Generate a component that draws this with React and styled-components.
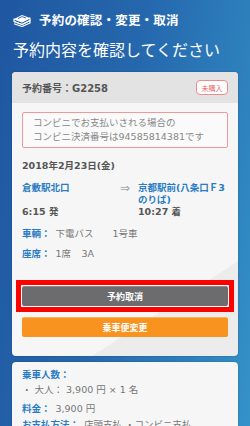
import React from 'react'
import styled, { createGlobalStyle } from 'styled-components'

const GlobalStyle = createGlobalStyle`
  html, body {
    margin: 0;
    padding: 0;
  }
  body {
    width: 250px;
    height: 426px;
    overflow: hidden;
    background: linear-gradient(100deg, #1f57a1 0%, #2567ad 45%, #2f85c0 85%, #3593c8 100%);
    font-family: "DejaVu Sans", "Noto Sans CJK JP", sans-serif;
  }
`

const Page = styled.div`
  padding: 0 12px;
`

const TopBar = styled.div`
  display: flex;
  align-items: center;
  gap: 8px;
  height: 25px;
  padding: 7px 1px 0;
`

const Title = styled.h1`
  margin: 0;
  font-family: "Noto Sans CJK JP", sans-serif;
  font-size: 12.5px;
  font-weight: 700;
  color: #fff;
  letter-spacing: 0.2px;
`

const Subtitle = styled.h2`
  margin: 6px 0 0 1px;
  height: 34px;
  line-height: 22px;
  font-family: "Noto Sans CJK JP", sans-serif;
  font-size: 16px;
  font-weight: 400;
  color: #fff;
`

const Card = styled.section`
  background: ${p => p.plain ? '#f6f6f6' : 'linear-gradient(147deg, #f6f6f6 78%, #ececec 78%)'};
  border-radius: 4px;
  overflow: hidden;
  margin-bottom: 6px;
  box-shadow: 0 0 2px rgba(0, 0, 0, 0.25);
`

const CardHeader = styled.div`
  display: flex;
  align-items: center;
  justify-content: space-between;
  height: 31px;
  padding: 0 10px;
  background: #e3e3e3;
`

const OrderNo = styled.div`
  font-size: 10px;
  font-weight: 700;
  color: #555;
`

const Badge = styled.span`
  display: inline-flex;
  align-items: center;
  justify-content: center;
  width: 30px;
  height: 13px;
  border: 1px solid #ec8c8c;
  border-radius: 4px;
  background: #fff;
  color: #e46a6a;
  font-family: "Noto Sans CJK JP", sans-serif;
  font-size: 7px;
`

const CardBody = styled.div`
  padding: ${p => p.compact ? '6px 10px 10px' : '9px 10px 19px'};
`

const Notice = styled.div`
  border: 1px solid #ee9a9a;
  border-radius: 2px;
  background: #fafafa;
  padding: 3px 10px;
  font-size: 9.5px;
  line-height: 14px;
  color: #888;
`

const DateLine = styled.div`
  margin-top: 11px;
  font-size: 9.5px;
  line-height: 14px;
  font-weight: 700;
  color: #555;
`

const Route = styled.div`
  display: grid;
  grid-template-columns: 98px 18px 1fr;
  margin-top: 9px;
  font-size: 9.5px;
  line-height: 12px;
  font-weight: 700;
`

const Stop = styled.div`
  display: flex;
  flex-direction: column;
  white-space: nowrap;
`

const Station = styled.span`
  color: #2b7cc3;
  min-height: ${p => p.rows * 12}px;
`

const Time = styled.span`
  color: #555;
`

const Arrow = styled.span`
  color: #a5a5a5;
  font-size: 12px;
  font-weight: 400;
  line-height: 12px;
`

const InfoRow = styled.div`
  display: flex;
  margin-top: ${p => p.gap}px;
  font-size: 9.5px;
  line-height: 14px;
  color: #777;
  white-space: nowrap;
`

const Label = styled.span`
  color: #2b7cc3;
  font-weight: 700;
  margin-right: 5px;
`

const Value = styled.span`
  width: ${p => p.w ? p.w + 'px' : 'auto'};
`

const Highlight = styled.div`
  margin: 19px -6px 0 -6px;
  padding: 1px;
  border: 5px solid #ff0000;
  background: #fff;
`

const Button = styled.button`
  display: flex;
  align-items: center;
  justify-content: center;
  width: 100%;
  height: 20px;
  margin: 0;
  margin-top: ${p => p.top || 0}px;
  border: none;
  border-top: 1px solid ${p => p.edge};
  border-radius: 2px;
  background: ${p => p.bg};
  color: #fff;
  font-family: "Noto Sans CJK JP", sans-serif;
  font-size: 9px;
  font-weight: 700;
  padding: 0;
`

const BookIcon = () => (
  <svg width="18" height="14" viewBox="0 0 18 14">
    <path d="M1 6 L9 2 L17 5 L9 9 Z" fill="#fff" />
    <path d="M1 6 L9 9 L17 5 L17 7.5 L9 11.5 L1 8.5 Z" fill="none" stroke="#fff" strokeWidth="1.2" strokeLinejoin="round" />
    <path d="M1 8.5 L9 11.5 L17 7.5 L17 10 L9 13.5 L1 10.8" fill="none" stroke="#fff" strokeWidth="1.2" strokeLinejoin="round" />
    <path d="M5 5.5 L9 3.6 L13 5" stroke="#2360a8" strokeWidth="0.9" fill="none" />
  </svg>
)

export default function App() {
  return (
    <>
      <GlobalStyle />
      <Page>
        <TopBar>
          <BookIcon />
          <Title>予約の確認・変更・取消</Title>
        </TopBar>
        <Subtitle>予約内容を確認してください</Subtitle>

        <Card>
          <CardHeader>
            <OrderNo>予約番号：G2258</OrderNo>
            <Badge>未購入</Badge>
          </CardHeader>
          <CardBody>
            <Notice>
              コンビニでお支払いされる場合の<br />
              コンビニ決済番号は94585814381です
            </Notice>
            <DateLine>2018年2月23日(金)</DateLine>
            <Route>
              <Stop>
                <Station rows={2}>倉敷駅北口</Station>
                <Time>6:15 発</Time>
              </Stop>
              <Arrow>⇒</Arrow>
              <Stop>
                <Station rows={2}>京都駅前(八条口Ｆ3<br />のりば)</Station>
                <Time>10:27 着</Time>
              </Stop>
            </Route>
            <InfoRow gap={9}>
              <Label>車輌：</Label>
              <Value w={57}>下電バス</Value>
              <Value>1号車</Value>
            </InfoRow>
            <InfoRow gap={6}>
              <Label>座席：</Label>
              <Value w={26}>1席</Value>
              <Value>3A</Value>
            </InfoRow>
            <Highlight>
              <Button bg="#6c6c6e" edge="#8a8a8c">予約取消</Button>
            </Highlight>
            <Button top={5} bg="#f7931e" edge="#fbb15c">乗車便変更</Button>
          </CardBody>
        </Card>

        <Card plain>
          <CardBody compact>
            <InfoRow gap={0}>
              <Label>乗車人数：</Label>
            </InfoRow>
            <InfoRow gap={1}>
              <Value>・ 大人： 3,900 円 × 1 名</Value>
            </InfoRow>
            <InfoRow gap={5}>
              <Label>料金：</Label>
              <Value>3,900 円</Value>
            </InfoRow>
            <InfoRow gap={2}>
              <Label>お支払方法：</Label>
              <Value>店頭支払 ・コンビニ支払</Value>
            </InfoRow>
          </CardBody>
        </Card>
      </Page>
    </>
  )
}
